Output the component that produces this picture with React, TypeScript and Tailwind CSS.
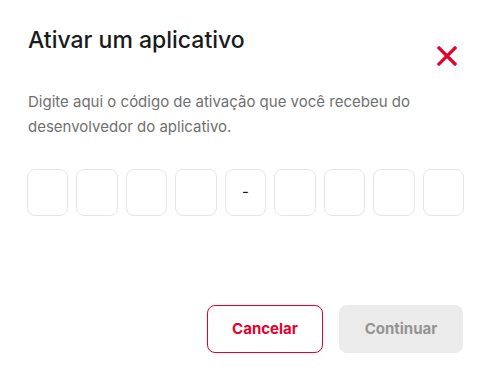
import React from "react";

export default function App() {
  const cells = ["", "", "", "", "-", "", "", "", ""];
  return (
    <div className="w-[491px] h-[379px] bg-white" style={{ fontFamily: "Inter, 'Noto Sans', sans-serif" }}>
      <div className="px-[27px] pt-[25px]">
        <div className="flex items-start justify-between h-[30px]">
          <h1 className="text-[23px] leading-[30px] font-medium text-[#1a1a1a] pl-[1px]">Ativar um aplicativo</h1>
          <button className="mt-[21px] mr-[7px] w-[20px] h-[20px] flex items-center justify-center">
            <svg width="20" height="20" viewBox="0 0 20 20">
              <path d="M2 2 L18 18 M18 2 L2 18" stroke="#e4002b" strokeWidth="3.2" strokeLinecap="square" />
            </svg>
          </button>
        </div>
        <p className="mt-[34px] text-[15px] leading-[25px] text-[#707070] pl-[1px] pr-[40px]">
          Digite aqui o código de ativação que você recebeu do desenvolvedor do aplicativo.
        </p>
        <div className="mt-[30px] flex gap-[8px]">
          {cells.map((c, i) => (
            <div
              key={i}
              className="w-[41.5px] h-[47px] rounded-[8px] border border-[#e6e6e6] flex items-center justify-center text-[15px] text-[#1a1a1a]"
            >
              {c}
            </div>
          ))}
        </div>
        <div className="mt-[89px] flex justify-end gap-[16px] pr-[1px]">
          <button className="w-[116px] h-[48px] rounded-[8px] border border-[#e4002b] text-[#e4002b] text-[15px] font-bold">
            Cancelar
          </button>
          <button className="w-[124px] h-[48px] rounded-[8px] bg-[#ebebeb] text-[#949494] text-[15px] font-bold">
            Continuar
          </button>
        </div>
      </div>
    </div>
  );
}
